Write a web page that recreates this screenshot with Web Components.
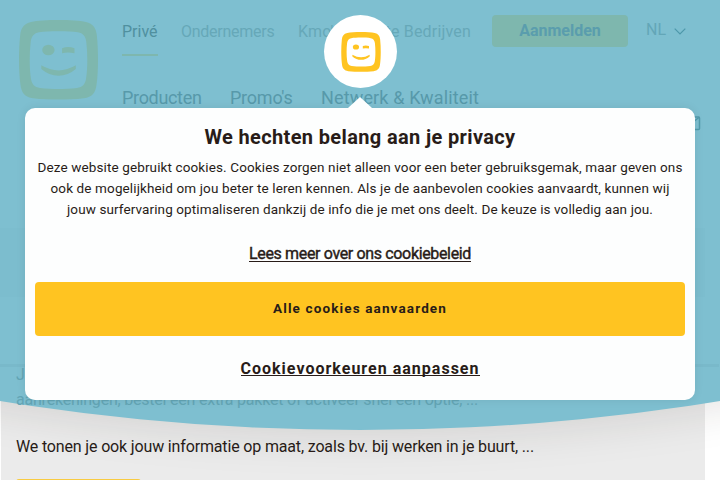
<!DOCTYPE html>
<html lang="nl"><head><meta charset="utf-8"><title>Telenet</title>
<style>html,body{margin:0;width:720px;height:480px;overflow:hidden;background:#fff;font-family:Roboto,"Liberation Sans",sans-serif;color:#281c18}</style></head>
<body><telenet-page></telenet-page>
<script>
const define=(name,html,ready)=>customElements.define(name,class extends HTMLElement{
 connectedCallback(){if(this.shadowRoot)return;this.attachShadow({mode:'open'}).innerHTML=html;if(ready)ready(this);}
});
define('text-line','<style>:host{display:block;white-space:nowrap;width:max-content}span{display:inline-block}</style><span><slot></slot></span>',el=>{
 const w=parseFloat(el.getAttribute('width'));if(!w)return;
 const span=el.shadowRoot.querySelector('span'),n=el.textContent.length;
 const spacing=(w-span.getBoundingClientRect().width)/n;
 el.style.letterSpacing=spacing+'px';
});
define('smile-logo',`<style>:host{display:block;flex:none}svg{display:block;width:100%;height:100%}</style>
<svg viewBox="0 0 79 80" fill="currentColor"><path fill-rule="evenodd" d="M39.500 0C50 0 61 .6 67 2 74 3.500 77 8 77.800 15 78.700 23 79 32 79 40 79 49 78.500 58 77.500 65 76.500 73 73 77 65 78.300 57 79.300 48 79.600 39.500 79.600 31 79.600 22 79.300 14 78.300 6 77 2.500 73 1.500 65 .5 58 0 49 0 40 0 32 .3 23 1.200 15 2 8 5 3.500 12 2 18 .6 29 0 39.500 0ZM39.500 11.200C32 11.200 25 11.500 20 12.300 15 13.200 12.500 16 11.700 22 11 28 10.700 34 10.700 40 10.700 46 11 53 12 59 13 64.500 15.500 67 21 67.900 27 68.700 34 69 39.500 69 45 69 52 68.700 58 67.900 63.500 67 66 64.500 67 59 68 53 68.300 46 68.300 40 68.300 34 68 28 67.300 22 66.500 16 64 13.200 59 12.300 54 11.500 47 11.200 39.500 11.200Z"/><ellipse cx="29.400" cy="30" rx="6.200" ry="5.200"/><path d="M43.100 28.200Q49 25.700 55.500 28.200V33.200Q49 31.800 43.100 33.200ZM22.300 45.300Q39.500 55.500 56.800 45.300V49Q49 55.700 39.500 55.700 30 55.700 22.300 49Z"/></svg>`);
define('nav-row','<style>:host{display:flex;align-items:flex-start}</style><slot></slot>');
define('login-button',`<style>:host{display:flex;width:136px;height:32px;border-radius:4px;background:#7eb7ae;color:#5a9dad;font-weight:700;font-size:16px;line-height:32px;justify-content:center}</style><text-line width="83"><slot></slot></text-line>`);
define('lang-picker',`<style>:host{display:flex;gap:8px;color:#63a6b7;font-size:16px;line-height:24px}svg{margin-top:10px}</style><text-line width="19.500"><slot></slot></text-line><svg width="12" height="8" viewBox="0 0 12 8" fill="none" stroke="#4d98aa" stroke-width="1.200"><path d="M.7.700 6 6 11.300.7"/></svg>`);
define('site-header',`<style>:host{display:grid;grid-template-columns:103.500px 370px 154px 1fr;padding-left:18.500px;height:130px;position:relative}
smile-logo{width:79px;height:80px;color:#7eb7ae;margin-top:20px}
.top{margin-top:20px;height:65px;gap:23.500px;font-size:16px;line-height:24px;color:#66a8b8}.current{color:#50909f;border-bottom:2px solid #7eb7ae;padding-bottom:10px}
.main{gap:28.500px;font-size:18px;line-height:25px;color:#5799aa}login-button{margin-top:15px}lang-picker{margin-top:18px}
.mail{position:absolute;left:681px;top:116px}</style>
<smile-logo></smile-logo><div><nav-row class="top"><text-line class="current" width="35.500">Privé</text-line><text-line width="93.500">Ondernemers</text-line><text-line width="173">Kmo's &amp; Grote Bedrijven</text-line></nav-row>
<nav-row class="main"><text-line width="79.500">Producten</text-line><text-line width="62.500">Promo's</text-line><text-line width="158">Netwerk &amp; Kwaliteit</text-line></nav-row></div><login-button>Aanmelden</login-button><lang-picker>NL</lang-picker>
<svg class="mail" width="20" height="15" fill="none" stroke="#529bac" stroke-width="1.500"><rect x="1" y="1" width="17.500" height="12.500" rx="1"/><path d="m1 1 8.700 7 8.700-7"/></svg>`);
define('info-panel',`<style>:host{display:block;width:704px;margin-left:1px;background:#ebebeb;box-sizing:border-box;padding:0 15px;font-size:16px;line-height:24px}.button{width:125px;height:12px;margin-top:20px;background:#f8cb42;border-radius:3px}</style><text-line width="518">We tonen je ook jouw informatie op maat, zoals bv. bij werken in je buurt, ...</text-line><div class="button"></div>`);
define('curved-backdrop',`<style>:host{position:absolute;inset:0;overflow:hidden}.arc{position:absolute;left:-1889px;top:-4068px;width:4498px;height:4498px;border-radius:50%;background:#7ebfd0;box-shadow:0 4px 45px rgba(40,28,24,.13)}</style><div class="arc"></div>`);
define('page-behind',`<style>:host{display:flex;flex-direction:column;position:absolute;inset:0;height:480px}.hero{margin-top:98px;width:705px;height:69px;background:#7cbdce}.rule{height:3px;width:719px;margin-top:67px;background:#79b9ca}.copy{margin-left:16px;margin-top:-5px;font-size:16px;line-height:25px;color:#63a5b5}</style><site-header></site-header><div class="hero"></div><div class="rule"></div><div class="copy"><text-line width="9">J</text-line><text-line width="462">aanrekeningen, bestel een extra pakket of activeer snel een optie, ...</text-line></div>`);
define('cookie-dialog',`<style>:host{position:absolute;left:25px;top:108px;width:670px;height:292px;box-sizing:border-box;padding:17px 10px 0;border-radius:10px;background:#fdfefe;box-shadow:0 0 10px rgba(0,0,0,.08);display:flex;flex-direction:column;align-items:center}
.badge{position:absolute;left:299px;top:-93px;width:73px;height:73px;border-radius:50%;background:#fff;display:grid;place-items:center}.badge smile-logo{width:40px;height:40px;margin-left:1px;color:#ffc421}
.arrow{position:absolute;left:323px;top:-11px;width:24px;height:11px;background:#fdfefe;clip-path:polygon(50% 0,100% 100%,0 100%)}
.title{font-size:20px;line-height:24px;font-weight:700}.copy{margin-top:8px;font-size:13.500px;line-height:21px;display:flex;flex-direction:column;align-items:center}
.link{font-size:16px;line-height:20px;height:17px;margin-top:24px;border-bottom:1px solid;-webkit-text-stroke:.4px}
.accept{font:inherit;align-self:stretch;display:flex;justify-content:center;align-items:center;width:650px;height:54px;border:0;border-radius:4px;background:#ffc421;color:#281c18;padding:0 0 2px;margin-top:20px;font-size:13.500px;font-weight:700}
.pref{font-size:16px;font-weight:700;line-height:20px;height:16px;margin-top:23px;border-bottom:1px solid}</style>
<div class="badge"><smile-logo></smile-logo></div><div class="arrow"></div><text-line class="title" width="311">We hechten belang aan je privacy</text-line>
<div class="copy"><text-line width="645">Deze website gebruikt cookies. Cookies zorgen niet alleen voor een beter gebruiksgemak, maar geven ons</text-line><text-line width="619">ook de mogelijkheid om jou beter te leren kennen. Als je de aanbevolen cookies aanvaardt, kunnen wij</text-line><text-line width="586">jouw surfervaring optimaliseren dankzij de info die je met ons deelt. De keuze is volledig aan jou.</text-line></div>
<text-line class="link" width="222">Lees meer over ons cookiebeleid</text-line><button class="accept"><text-line width="174">Alle cookies aanvaarden</text-line></button><text-line class="pref" width="239">Cookievoorkeuren aanpassen</text-line>`);
define('telenet-page',`<style>:host{display:flex;flex-direction:column;justify-content:flex-end;position:relative;width:720px;height:480px;overflow:hidden}info-panel{height:119px;padding-top:74px}</style><info-panel></info-panel><curved-backdrop></curved-backdrop><page-behind></page-behind><cookie-dialog></cookie-dialog>`);
</script></body></html>
